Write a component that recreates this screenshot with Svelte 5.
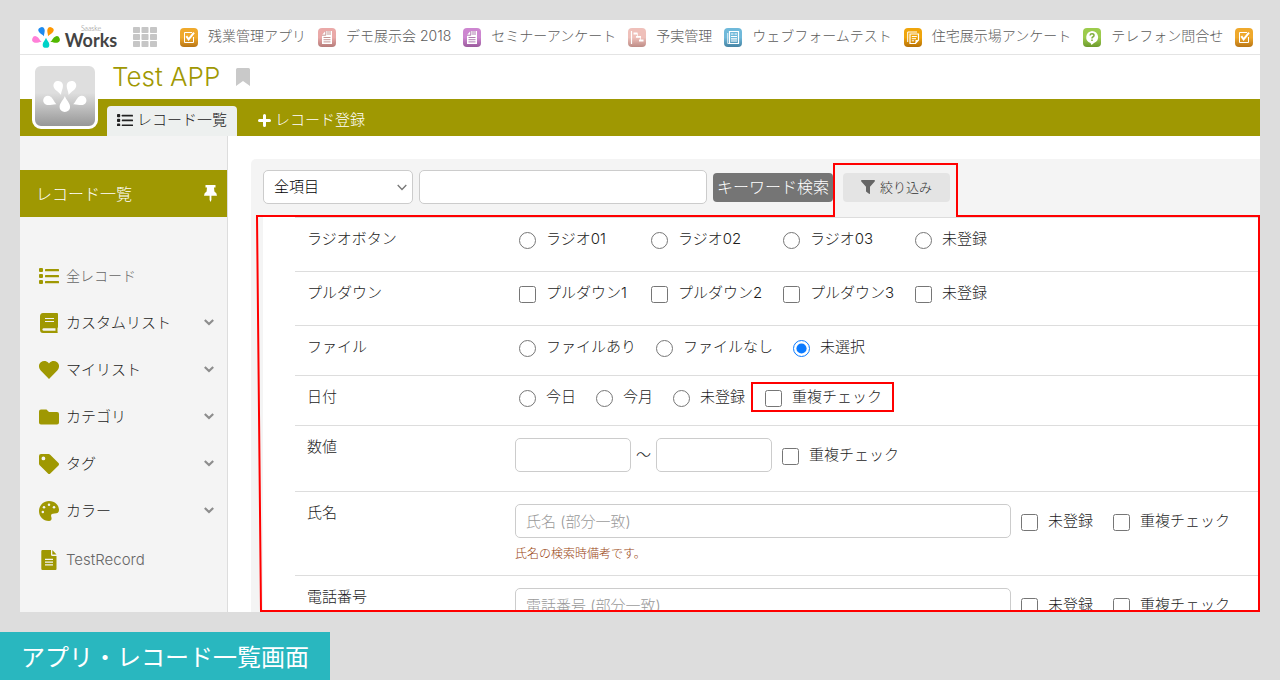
<script>
  const apps = [
    { name: '残業管理アプリ', icon: 'check', top: '#efa92c', bottom: '#b87414' },
    { name: 'デモ展示会 2018', icon: 'page', top: '#eaa9a8', bottom: '#b57b79' },
    { name: 'セミナーアンケート', icon: 'page', top: '#cd86d0', bottom: '#9a5a9c' },
    { name: '予実管理', icon: 'gantt', top: '#efc0ba', bottom: '#bd8c86' },
    { name: 'ウェブフォームテスト', icon: 'form', top: '#6fb9da', bottom: '#4583a3' },
    { name: '住宅展示場アンケート', icon: 'note', top: '#efa50c', bottom: '#b56f06' },
    { name: 'テレフォン問合せ', icon: 'help', top: '#9ccb4c', bottom: '#6d9a2c' },
    { name: '', icon: 'check', top: '#efa92c', bottom: '#b87414' }
  ];

  const menu = [
    { name: '全レコード', icon: 'list', plain: true },
    { name: 'カスタムリスト', icon: 'book' },
    { name: 'マイリスト', icon: 'heart' },
    { name: 'カテゴリ', icon: 'folder' },
    { name: 'タグ', icon: 'tag' },
    { name: 'カラー', icon: 'palette' },
    { name: 'TestRecord', icon: 'file', plain: true }
  ];

  const choices = [
    { label: 'ラジオボタン', type: 'radio', roomy: true, options: ['ラジオ01', 'ラジオ02', 'ラジオ03', '未登録'] },
    { label: 'プルダウン', type: 'checkbox', roomy: true, options: ['プルダウン1', 'プルダウン2', 'プルダウン3', '未登録'] },
    { label: 'ファイル', type: 'radio', options: ['ファイルあり', 'ファイルなし', '未選択'], picked: '未選択' },
    { label: '日付', type: 'radio', options: ['今日', '今月', '未登録'], duplicate: true }
  ];

  const texts = [
    { label: '氏名', hint: '氏名 (部分一致)', note: '氏名の検索時備考です。' },
    { label: '電話番号', hint: '電話番号 (部分一致)' }
  ];

  let width = $state(1009);
  let height = $state(453);
  // Callout line: wraps the filter button and the whole condition list.
  let outline = $derived(`M6 57H583V5H706V57H${width - 1}V${height - 1}H10Z`);
</script>

{#snippet drop(x, y, turn, fill, size = 1)}
  <path
    d="M0 0C-2-7-10-13-10-21A10 9.500 0 0 1 10-21C10-13 2-7 0 0Z"
    transform="translate({x} {y}) rotate({turn}) scale({size})"
    {fill}
  />
{/snippet}

{#snippet listIcon(w)}
  <svg width={w} height={w * 0.8} viewBox="0 0 20 16" fill="currentColor" aria-hidden="true">
    <rect width="4" height="4" rx="1" /><rect y="6" width="4" height="4" rx="1" /><rect y="12" width="4" height="4" rx="1" />
    <rect x="6" y="1" width="14" height="2.2" rx=".5" /><rect x="6" y="7" width="14" height="2.2" rx=".5" /><rect x="6" y="13" width="14" height="2.2" rx=".5" />
  </svg>
{/snippet}

<div class="page">
  <div class="app">
    <header class="topbar">
      <a class="brand" href="#home">
        <svg width="30" height="22" viewBox="33 33 90 66" aria-hidden="true">
          {@render drop(72, 64, -22, '#1e8bf0', 0.95)}
          {@render drop(84, 64, 22, '#ff9800', 0.95)}
          {@render drop(65, 81, -68, '#ff80d8', 0.98)}
          {@render drop(91, 81, 68, '#52b800', 0.98)}
          {@render drop(78, 68, 180, '#00d2c8')}
        </svg>
        <span class="brand-name"><small>Saaske</small><b>Works</b></span>
      </a>
      <button class="launcher" aria-label="メニュー">
        <svg width="24" height="20" viewBox="0 0 24 20" fill="#c6c6c6">
          {#each [0, 7, 14] as y}
            {#each [0, 8.5, 17] as x}
              <rect {x} {y} width="7" height="6" rx=".8" />
            {/each}
          {/each}
        </svg>
      </button>
      <nav class="apps">
        {#each apps as a, i}
          <a href="#app{i}">
            <svg width="18" height="19" viewBox="0 0 18 19" fill="none" stroke="#fff" stroke-width="1.2" aria-hidden="true">
              <defs>
                <linearGradient id="tile{i}" x2="0" y2="1">
                  <stop stop-color={a.top} /><stop offset=".5" stop-color={a.top} /><stop offset="1" stop-color={a.bottom} />
                </linearGradient>
              </defs>
              <rect width="18" height="19" rx="4" fill="url(#tile{i})" stroke="none" />
              {#if a.icon === 'check'}
                <path d="M12 4.5H4.5V14.5H13.5V9" stroke-width="1" /><path d="M6.3 8.2L8.6 11.4L14 4.6" stroke-width="2" />
              {:else if a.icon === 'page'}
                <path d="M7.5 3H14V16H4V7Z" fill="#fff" stroke="none" /><path d="M7.8 3V7.2H4M10 3V7M12 3V7M5.5 9.5H12.5M5.5 11.7H12.5M5.5 13.9H12.5" stroke={a.bottom} stroke-width=".8" />
              {:else if a.icon === 'gantt'}
                <path d="M3.5 3V16" /><path d="M5.5 5.5H9.5M8 8.8H13M11 12.5H15.5" stroke-width="1.8" /><path d="M9.5 5.5V9M12.5 9V12" stroke-width=".7" />
              {:else if a.icon === 'form'}
                <path d="M5.5 3.5H14.5V15.5H5.5Z" /><path d="M3.7 5V15.5H7" stroke-width=".8" /><path d="M7 6H9.5M10.5 6H13M7 8.5H13M7 10.8H13M7 13H13" />
              {:else if a.icon === 'note'}
                <path d="M3.7 14V4H13" stroke-width="1" /><path d="M6 6H14.5V12L11.5 15.5H6Z" /><path d="M7.8 8.5H12.8M7.8 10.7H12M7.8 12.8H10" stroke-width="1" /><path d="M14.5 12H11.5V15.5Z" fill="#fff" stroke="none" />
              {:else}
                <path d="M9 3A7 6.3 0 0 1 11 15L8.5 17L7.5 15A7 6.3 0 0 1 9 3Z" fill="#fff" stroke="none" />
                <path d="M7 7.5Q7.2 5.8 9 5.8Q11 5.8 11 7.4Q11 8.4 9.8 9Q9 9.4 9 10.4M9 11.6V13" stroke="#7fae3a" stroke-width="1.5" />
              {/if}
            </svg>
            {#if a.name}<span>{a.name}</span>{/if}
          </a>
        {/each}
      </nav>
    </header>

    <div class="heading">
      <div class="app-icon">
        <svg width="46" height="36" viewBox="64 186 140 108" aria-hidden="true">
          {@render drop(122, 237, -17, '#fff', 1.45)}
          {@render drop(145, 237, 17, '#fff', 1.45)}
          {@render drop(108, 265, -66, '#fff', 1.4)}
          {@render drop(159, 265, 66, '#fff', 1.4)}
          {@render drop(133.5, 240, 180, '#fff', 1.6)}
        </svg>
      </div>
      <div class="title">
        <h1>Test APP</h1>
        <svg width="14" height="18" viewBox="0 0 14 18" fill="#c9c9c9" aria-hidden="true"><path d="M0 1.5Q0 0 1.5 0H12.5Q14 0 14 1.5V18L7 13L0 18Z" /></svg>
      </div>
      <nav class="tabs">
        <a class="tab current" href="#list">{@render listIcon(16)}<span>レコード一覧</span></a>
        <a class="tab" href="#new">
          <svg width="13" height="13" viewBox="0 0 13 13" stroke="#fff" stroke-width="3" stroke-linecap="round" aria-hidden="true"><path d="M6.5 1.5V11.5M1.5 6.5H11.5" /></svg>
          <span>レコード登録</span>
        </a>
      </nav>
    </div>

    <div class="body">
      <aside class="sidebar">
        <div class="side-title">
          <h2>レコード一覧</h2>
          <svg width="13" height="17" viewBox="0 0 13 17" fill="#fff" aria-hidden="true"><path d="M1.5 0H11.5V2.5H10L10.4 6.5Q13 8 13 10.7H7.4V15L6.5 17L5.6 15V10.7H0Q0 8 2.6 6.5L3 2.5H1.5Z" /></svg>
        </div>
        <ul>
          {#each menu as m}
            <li>
              <a class:plain={m.plain} href="#{m.icon}">
                <span class="menu-icon">
                  {#if m.icon === 'list'}
                    {@render listIcon(20)}
                  {:else}
                    <svg width="20" height="20" viewBox="0 0 20 20" fill="currentColor" aria-hidden="true">
                      {#if m.icon === 'book'}
                        <path d="M4 0H18Q19 0 19 1V14Q19 14.700 18.500 15V18.500Q19 19 18.500 20H4Q1 20 1 16.500V3.500Q1 0 4 0Z" />
                        <path d="M6 5.500H15M6 8.500H15" stroke="#f4f4f4" stroke-width="1.200" /><path d="M4.500 15.300H16.500V17.800H4.500Q3.300 17.500 3.300 16.500T4.500 15.300Z" fill="#f4f4f4" />
                      {:else if m.icon === 'heart'}
                        <path d="M10 19L1.700 10.500C-.8 7.800-.5 4.200 1.800 2.300C4.200.4 7.500.8 9.400 2.800L10 3.400L10.600 2.800C12.500.8 15.800.4 18.200 2.300C20.500 4.200 20.800 7.800 18.300 10.500Z" />
                      {:else if m.icon === 'folder'}
                        <path d="M2 2.500H7.500L10 5H18Q20 5 20 7V15.500Q20 17.500 18 17.500H2Q0 17.500 0 15.500V4.500Q0 2.500 2 2.500Z" />
                      {:else if m.icon === 'tag'}
                        <path fill-rule="evenodd" d="M0 9.500V2Q0 0 2 0H9.500Q10.500 0 11.200.7L19.500 9Q20.500 10.200 19.500 11.400L11.300 19.400Q10.100 20.400 9 19.400L.7 11.200Q0 10.500 0 9.500ZM4.400 2.500A1.900 1.900 0 1 0 4.400 6.300A1.900 1.900 0 1 0 4.400 2.500Z" />
                      {:else if m.icon === 'palette'}
                        <path d="M10 0C16 0 20 4.300 20 9Q20 12.500 15.500 12.500C12.500 12.500 11.500 14 12.300 16C13 18 12.500 20 10 20C4 20 0 15.500 0 10C0 4.500 4.500 0 10 0Z" />
                        <g fill="#f4f4f4"><circle cx="3.800" cy="11" r="1.250" /><circle cx="5" cy="6.200" r="1.250" /><circle cx="10" cy="3.700" r="1.250" /><circle cx="15" cy="6.200" r="1.250" /></g>
                      {:else}
                        <path d="M3.500 0H12V4.500Q12 6 13.500 6H17.500V18.800Q17.500 20 16.500 20H3.500Q2.300 20 2.300 18.800V1.200Q2.300 0 3.500 0ZM13.300 0L17.500 4.500H13.300Z" />
                        <path d="M6 9.300H14M6 12.100H14M6 14.900H14" stroke="#f4f4f4" stroke-width="1.200" />
                      {/if}
                    </svg>
                  {/if}
                </span>
                <span class="menu-name">{m.name}</span>
                {#if !m.plain}
                  <svg width="10" height="7" viewBox="0 0 10 7" fill="none" stroke="#8d8d8d" stroke-width="2.200" aria-hidden="true"><path d="M.8 1L5 5L9.200 1" /></svg>
                {/if}
              </a>
            </li>
          {/each}
        </ul>
      </aside>

      <main>
        <section class="panel" bind:clientWidth={width} bind:clientHeight={height}>
          <form class="search" onsubmit={(e) => e.preventDefault()}>
            <span class="select">
              <select aria-label="検索項目"><option>全項目</option></select>
              <svg width="10" height="7" viewBox="0 0 10 7" fill="none" stroke="#777" stroke-width="1.300" aria-hidden="true"><path d="M.7 1L5 5.500L9.300 1" /></svg>
            </span>
            <input class="box keyword" type="text" aria-label="キーワード" />
            <button class="go">キーワード検索</button>
            <button class="narrow" type="button">
              <svg width="14" height="14" viewBox="0 0 14 14" fill="#666" aria-hidden="true"><path d="M.8 0H13.200Q14.400.3 13.700 1.400L9 6.700V13.200Q9 14.300 8 13.700L5.300 11.800Q5 11.500 5 11V6.700L.3 1.400Q-.4.300.8 0Z" /></svg>
              <span>絞り込み</span>
            </button>
          </form>

          <div class="conditions">
            {#each choices as c, n}
              <fieldset class="row" class:roomy={c.roomy} aria-label={c.label}>
                <div class="name">{c.label}</div>
                <div class="options" class:columns={c.roomy}>
                  {#each c.options as o}
                    <label><input type={c.type} name="q{n}" checked={o === c.picked} />{o}</label>
                  {/each}
                  {#if c.duplicate}
                    <label class="marked"><input type="checkbox" />重複チェック</label>
                  {/if}
                </div>
              </fieldset>
            {/each}

            <div class="row numeric">
              <div class="name">数値</div>
              <div class="fields range">
                <input class="box number" type="text" aria-label="数値 下限" />
                <span>～</span>
                <input class="box number" type="text" aria-label="数値 上限" />
                <label><input type="checkbox" />重複チェック</label>
              </div>
            </div>

            {#each texts as t, n}
              <div class="row noted">
                <label class="name" for="text{n}">{t.label}</label>
                <div>
                  <div class="fields">
                    <input class="box wide" id="text{n}" type="text" placeholder={t.hint} />
                    <label><input type="checkbox" />未登録</label>
                    <label class="next"><input type="checkbox" />重複チェック</label>
                  </div>
                  {#if t.note}<p>{t.note}</p>{/if}
                </div>
              </div>
            {/each}
          </div>

          <svg class="outline" aria-hidden="true"><path d={outline} /></svg>
        </section>
      </main>
    </div>
  </div>

  <footer>アプリ・レコード一覧画面</footer>
</div>

<style>
  :global(body) { margin: 0; }
  * { box-sizing: border-box; }
  .page {
    --olive: #9f9802;
    --pale: #f4f4f4;
    display: grid;
    grid-template-rows: minmax(0, 1fr) auto;
    gap: 20px;
    height: 100vh;
    padding-top: 20px;
    background: #ddd;
    color: #1c1c1c;
    font: 300 15px/22px Inter, "Noto Sans CJK JP", sans-serif;
  }
  a { color: inherit; text-decoration: none; }
  h1, h2, p, ul { margin: 0; padding: 0; font-weight: inherit; }
  button, input, select { font: inherit; }
  button { border: 0; padding: 0; background: none; cursor: pointer; }
  svg { flex: none; display: block; }
  .app { display: flex; flex-direction: column; margin: 0 20px; overflow: hidden; background: #fff; }

  .topbar { display: flex; align-items: center; height: 35px; flex: none; padding-left: 11px; border-bottom: 1px solid #e4e4e4; }
  .brand { display: flex; align-items: center; gap: 4px; }
  .brand-name { display: flex; flex-direction: column; align-items: center; width: 52px; padding-bottom: 2px; color: #444; font-family: Lato, sans-serif; }
  .brand-name small { font-size: 7px; line-height: 8px; color: #777; }
  .brand-name b { font-size: 18px; line-height: 16px; font-weight: 700; }
  .launcher { margin-left: 16px; }
  .apps { display: flex; gap: 12px; margin-left: 23px; min-width: 0; color: #5c5c5c; font-size: 14px; white-space: nowrap; }
  .apps a { display: flex; align-items: center; gap: 10px; flex: none; }
  .apps span { padding-bottom: 2px; }

  .heading { display: grid; grid-template: 44px 37px / 87px 1fr; flex: none; }
  .app-icon {
    grid-area: 1 / 1 / 3 / 2; z-index: 1; place-self: end center; display: grid; place-items: center;
    width: 66px; height: 66px; margin: 0 1px 7px 4px; border: 3px solid #fff; border-radius: 9px;
    background: linear-gradient(#dedede 45%, #979797);
  }
  .title { grid-area: 1 / 2; display: flex; align-items: center; gap: 16px; padding-left: 5px; }
  h1 { color: var(--olive); font-size: 26px; line-height: 30px; }
  .tabs { grid-area: 2 / 1 / 3 / 3; display: flex; align-items: end; gap: 11px; padding-left: 87px; background: var(--olive); color: #fff; }
  .tab { display: flex; align-items: center; gap: 4px; height: 30px; padding: 0 10px 2px; }
  .current { background: #edf0ef; color: #222; border-radius: 4px 4px 0 0; }

  .body { display: grid; grid-template-columns: 208px minmax(0, 1fr); flex: 1; min-height: 0; }
  .sidebar { padding-top: 34px; border-right: 1px solid #ddd; background: var(--pale); }
  .side-title { display: flex; align-items: center; justify-content: space-between; height: 47px; padding: 0 10px 0 16px; background: var(--olive); color: #fff; }
  h2 { font-size: 16px; }
  ul { list-style: none; padding-top: 35px; }
  li a { display: flex; align-items: center; gap: 7px; height: 47px; padding: 0 13px 0 19px; }
  li:last-child { padding-top: 2px; }
  .menu-icon { color: var(--olive); }
  .menu-name { flex: 1; }
  .plain { color: #666; }
  li:first-child a { font-size: 14px; }

  main { display: flex; min-height: 0; padding: 23px 0 0 23px; }
  .panel { position: relative; flex: 1; min-width: 0; padding: 11px 0 0 12px; background: var(--pale); border-radius: 5px 0 0 0; }
  .search { display: flex; align-items: center; gap: 6px; margin-bottom: 13px; }
  .select { display: grid; align-items: center; flex: 0 1 150px; }
  .select > * { grid-area: 1 / 1; }
  .select svg { justify-self: end; margin-right: 6px; pointer-events: none; }
  select, .box { height: 34px; border: 1px solid #ccc; border-radius: 5px; background: #fff; min-width: 0; padding: 0 10px; margin: 0; }
  select { appearance: none; width: 100%; color: #000; }
  .keyword { flex: 0 1 288px; }
  .go, .narrow { height: 29px; border-radius: 4px; white-space: nowrap; }
  .go { padding: 0 4px; background: #757575; color: #fff; font-size: 16px; }
  .narrow { display: flex; align-items: center; gap: 5px; margin-left: 4px; padding: 0 18px; background: #e4e4e4; color: #333; font-size: 13px; }

  .conditions { height: calc(100% - 47px); overflow: hidden; padding-left: 32px; background: #fff; }
  .row {
    display: grid; grid-template-columns: 208px minmax(0, 1fr); min-width: 0; margin: 0;
    padding: 10px 0 17px 12px; border: 0 solid #ddd; border-bottom-width: 1px;
  }
  .row:first-child { border-top-width: 1px; }
  .roomy { padding-bottom: 21px; }
  .numeric { padding-bottom: 19px; }
  .noted { padding-bottom: 13px; }
  .options { display: flex; gap: 20px; padding-left: 4px; }
  .options label, .fields label { display: flex; align-items: center; gap: 10px; white-space: nowrap; }
  .columns label { min-width: 112px; }
  input[type='radio'], input[type='checkbox'] { flex: none; width: 17px; height: 17px; margin: 2px 0 0; accent-color: #0a7aff; }
  .options .marked { margin: -4px 0 -4px -14px; padding: 0 10px 0 12px; border: 2px solid #f00; }
  .fields { display: flex; align-items: center; gap: 10px; margin-top: 2px; }
  .range { gap: 5px; }
  .range label { padding-left: 5px; }
  .number { width: 116px; }
  .wide { flex: 0 1 496px; }
  .next { margin-left: 10px; }
  ::placeholder { color: #999; opacity: 1; }
  p { margin-top: 8px; color: #98430f; font-size: 12px; line-height: 16px; }
  .outline { position: absolute; inset: 0; width: 100%; height: 100%; pointer-events: none; fill: none; stroke: #f00; stroke-width: 2px; }

  footer { justify-self: start; padding: 0 21px; background: #29b7bf; color: #fff; font: 400 24px/48px "Noto Sans CJK JP", sans-serif; }
</style>
